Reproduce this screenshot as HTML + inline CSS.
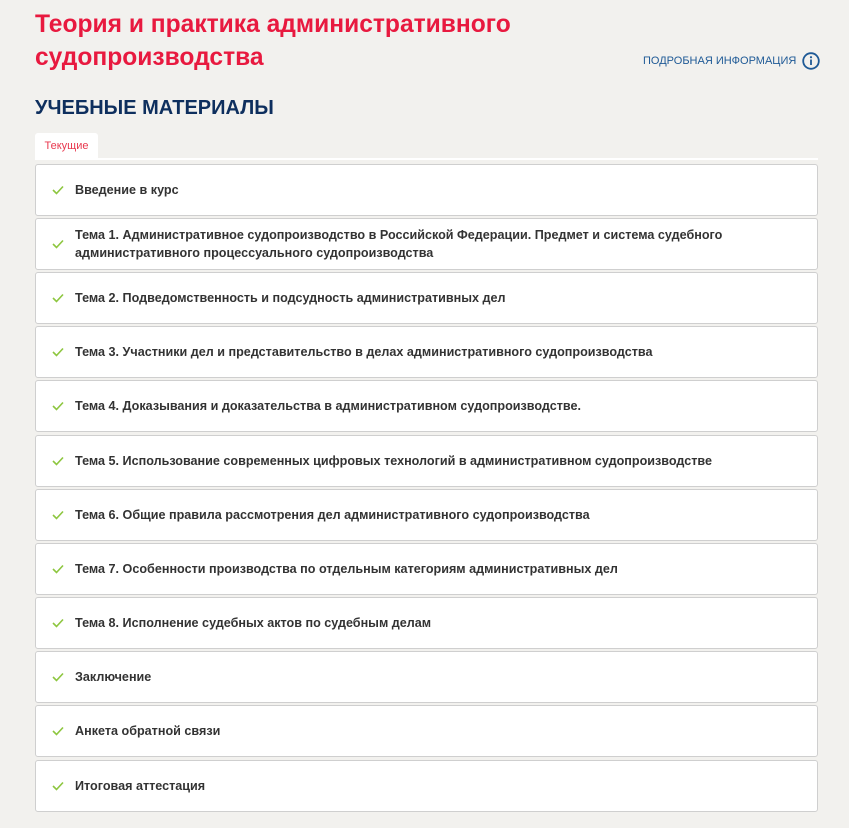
<!DOCTYPE html>
<html><head><meta charset="utf-8"><style>
body{margin:0;background:#f2f1ee;width:849px;height:828px;overflow:hidden;font-family:"Liberation Sans",sans-serif;}
h1{position:absolute;left:35px;top:8px;margin:0;font-size:24.6px;line-height:33px;font-weight:bold;color:#e8193f;width:520px;}
.info{position:absolute;left:643px;top:52px;font-size:11px;color:#1f5a96;display:flex;align-items:center;}
.info svg{margin-left:6px}
h2{position:absolute;left:35px;top:97px;margin:0;font-size:20px;font-weight:bold;color:#0e2f5e;}
.tab{position:absolute;left:35px;top:133px;width:63px;height:25px;background:#fff;border-radius:3px 3px 0 0;color:#e8394f;font-size:11px;line-height:27px;text-align:center;}
.line{position:absolute;left:35px;top:158px;width:783px;height:2px;background:#fff;}
.item{position:absolute;left:35px;width:781px;height:50px;background:#fff;border:1px solid #cfcfcf;border-radius:3px;display:flex;align-items:center;}
.item svg{position:absolute;left:16px;top:50%;margin-top:-5px}
.item span{margin-left:39px;font-size:12.6px;font-weight:bold;color:#333;line-height:18px;}
</style></head><body>
<h1>Теория и практика административного судопроизводства</h1>
<div class="info">ПОДРОБНАЯ ИНФОРМАЦИЯ <svg width="18" height="18" viewBox="0 0 18 18"><circle cx="9" cy="9" r="7.8" fill="none" stroke="#1f5a96" stroke-width="1.8"/><rect x="8.1" y="7.5" width="1.8" height="5.5" fill="#1f5a96"/><circle cx="9" cy="5.2" r="1.1" fill="#1f5a96"/></svg></div>
<h2>УЧЕБНЫЕ МАТЕРИАЛЫ</h2>
<div class="tab">Текущие</div>
<div class="line"></div>
<div class="item" style="top:164px"><svg width="12" height="10"><path d="M1 5l3.5 3.5L11 1.5" fill="none" stroke="#8dc63f" stroke-width="1.6"/></svg><span>Введение в курс</span></div>
<div class="item" style="top:218px"><svg width="12" height="10"><path d="M1 5l3.5 3.5L11 1.5" fill="none" stroke="#8dc63f" stroke-width="1.6"/></svg><span>Тема 1. Административное судопроизводство в Российской Федерации. Предмет и система судебного<br>административного процессуального судопроизводства</span></div>
<div class="item" style="top:272px"><svg width="12" height="10"><path d="M1 5l3.5 3.5L11 1.5" fill="none" stroke="#8dc63f" stroke-width="1.6"/></svg><span>Тема 2. Подведомственность и подсудность административных дел</span></div>
<div class="item" style="top:326px"><svg width="12" height="10"><path d="M1 5l3.5 3.5L11 1.5" fill="none" stroke="#8dc63f" stroke-width="1.6"/></svg><span>Тема 3. Участники дел и представительство в делах административного судопроизводства</span></div>
<div class="item" style="top:380px"><svg width="12" height="10"><path d="M1 5l3.5 3.5L11 1.5" fill="none" stroke="#8dc63f" stroke-width="1.6"/></svg><span>Тема 4. Доказывания и доказательства в административном судопроизводстве.</span></div>
<div class="item" style="top:435px"><svg width="12" height="10"><path d="M1 5l3.5 3.5L11 1.5" fill="none" stroke="#8dc63f" stroke-width="1.6"/></svg><span>Тема 5. Использование современных цифровых технологий в административном судопроизводстве</span></div>
<div class="item" style="top:489px"><svg width="12" height="10"><path d="M1 5l3.5 3.5L11 1.5" fill="none" stroke="#8dc63f" stroke-width="1.6"/></svg><span>Тема 6. Общие правила рассмотрения дел административного судопроизводства</span></div>
<div class="item" style="top:543px"><svg width="12" height="10"><path d="M1 5l3.5 3.5L11 1.5" fill="none" stroke="#8dc63f" stroke-width="1.6"/></svg><span>Тема 7. Особенности производства по отдельным категориям административных дел</span></div>
<div class="item" style="top:597px"><svg width="12" height="10"><path d="M1 5l3.5 3.5L11 1.5" fill="none" stroke="#8dc63f" stroke-width="1.6"/></svg><span>Тема 8. Исполнение судебных актов по судебным делам</span></div>
<div class="item" style="top:651px"><svg width="12" height="10"><path d="M1 5l3.5 3.5L11 1.5" fill="none" stroke="#8dc63f" stroke-width="1.6"/></svg><span>Заключение</span></div>
<div class="item" style="top:705px"><svg width="12" height="10"><path d="M1 5l3.5 3.5L11 1.5" fill="none" stroke="#8dc63f" stroke-width="1.6"/></svg><span>Анкета обратной связи</span></div>
<div class="item" style="top:760px"><svg width="12" height="10"><path d="M1 5l3.5 3.5L11 1.5" fill="none" stroke="#8dc63f" stroke-width="1.6"/></svg><span>Итоговая аттестация</span></div>
</body></html>
